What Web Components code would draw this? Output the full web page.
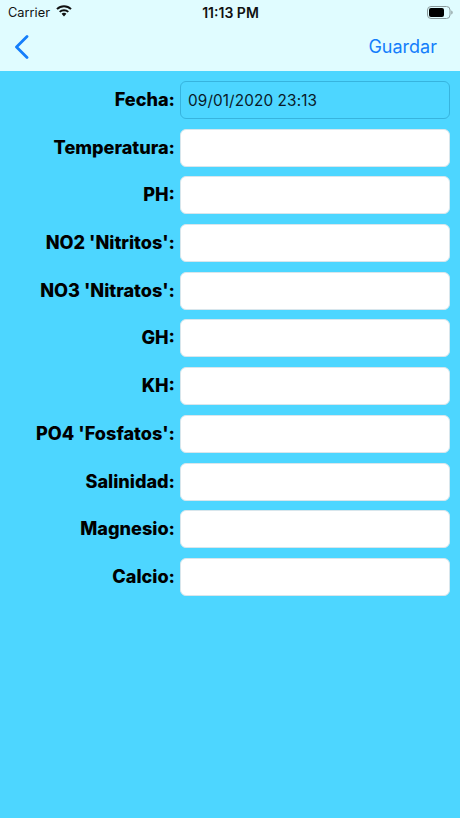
<!DOCTYPE html>
<html><head><meta charset="utf-8"><style>
html,body{margin:0;padding:0;height:100%}
body{background:#4dd6ff;font-family:Inter,"Noto Sans",sans-serif;color:#000}
app-screen{height:818px}
</style></head><body>
<app-screen>
<status-bar></status-bar>
<nav-bar></nav-bar>
<form-list>
<form-row label="Fecha:" value="09/01/2020 23:13" disabled></form-row>
<form-row label="Temperatura:"></form-row>
<form-row label="PH:"></form-row>
<form-row label="NO2 'Nitritos':"></form-row>
<form-row label="NO3 'Nitratos':"></form-row>
<form-row label="GH:"></form-row>
<form-row label="KH:"></form-row>
<form-row label="PO4 'Fosfatos':"></form-row>
<form-row label="Salinidad:"></form-row>
<form-row label="Magnesio:"></form-row>
<form-row label="Calcio:"></form-row>
</form-list>
</app-screen>
<script>
class AppScreen extends HTMLElement{constructor(){super();this.attachShadow({mode:'open'}).innerHTML=`<style>:host{display:flex;flex-direction:column;width:460px;overflow:hidden;background:#4dd6ff}</style><slot></slot>`}}
class StatusBar extends HTMLElement{constructor(){super();this.attachShadow({mode:'open'}).innerHTML=`<style>
:host{display:grid;grid-template-columns:1fr auto 1fr;align-items:center;height:24px;padding:0 7px 0 8px;background:#e0fcff;font-size:12.800px;color:#111}
.l{display:flex;align-items:center;gap:6px}
.t{font-weight:600;font-size:14px}
.r{display:flex;justify-content:flex-end}
svg{display:block}
.l svg{margin-top:-2px}
</style>
<div class="l"><span>Carrier</span><svg width="16" height="12" viewBox="0 0 16 12"><g fill="none" stroke="#111" stroke-width="2"><path d="M1 4.100a10 10 0 0 1 14 0"/><path d="M3.700 6.900a6.200 6.200 0 0 1 8.600 0"/></g><path d="M8 7.700c-1 0-1.800.4-2.400 1L8 11.500l2.400-2.800c-.6-.6-1.400-1-2.400-1z" fill="#111"/></svg></div>
<div class="t">11:13 PM</div>
<div class="r"><svg width="26" height="13" viewBox="0 0 26 13"><rect x=".5" y=".5" width="22.500" height="12" rx="3.500" fill="none" stroke="#8a9a9c"/><rect x="2" y="2" width="15" height="9" rx="2" fill="#000"/><path d="M24.300 4.500v4c.8-.3 1.300-1.100 1.300-2s-.5-1.700-1.300-2z" fill="#8a9a9c"/></svg></div>`}}
class NavBar extends HTMLElement{constructor(){super();this.attachShadow({mode:'open'}).innerHTML=`<style>
:host{display:flex;align-items:center;justify-content:space-between;height:47px;padding:0 23px 2px 14px;background:#e0fcff;color:#147efb;font-size:18px;box-sizing:border-box}
svg{display:block}
</style><svg width="15" height="24" viewBox="0 0 15 24"><path d="M13 1.500 2.500 12 13 22.500" fill="none" stroke="#147efb" stroke-width="2.800" stroke-linecap="round" stroke-linejoin="round"/></svg><span>Guardar</span>`}}
class FormList extends HTMLElement{constructor(){super();this.attachShadow({mode:'open'}).innerHTML=`<style>:host{display:flex;flex-direction:column;gap:9.700px;padding:10px 10px 0 0}</style><slot></slot>`}}
class FormRow extends HTMLElement{constructor(){super();const d=this.hasAttribute('disabled');const r=this.attachShadow({mode:'open'});r.innerHTML=`<style>
:host{display:grid;grid-template-columns:175px 1fr;column-gap:5px;align-items:center;height:38px}
label{text-align:right;font-weight:800;font-size:18.100px;white-space:nowrap;color:#000;margin-bottom:2px}
.f{box-sizing:border-box;height:38px;border-radius:6px;padding:0 7px;display:flex;align-items:center;font-size:15.300px;letter-spacing:.12px;color:#0a1a28;background:#fff;border:1px solid #d8e6ec}
.f.d{background:#4dd6ff;border-color:#37b4de}
</style><label></label><div class="f${d?' d':''}"></div>`;
r.querySelector('label').textContent=this.getAttribute('label');r.querySelector('.f').textContent=this.getAttribute('value')||''}}
customElements.define('app-screen',AppScreen);customElements.define('status-bar',StatusBar);customElements.define('nav-bar',NavBar);customElements.define('form-list',FormList);customElements.define('form-row',FormRow);
</script></body></html>
